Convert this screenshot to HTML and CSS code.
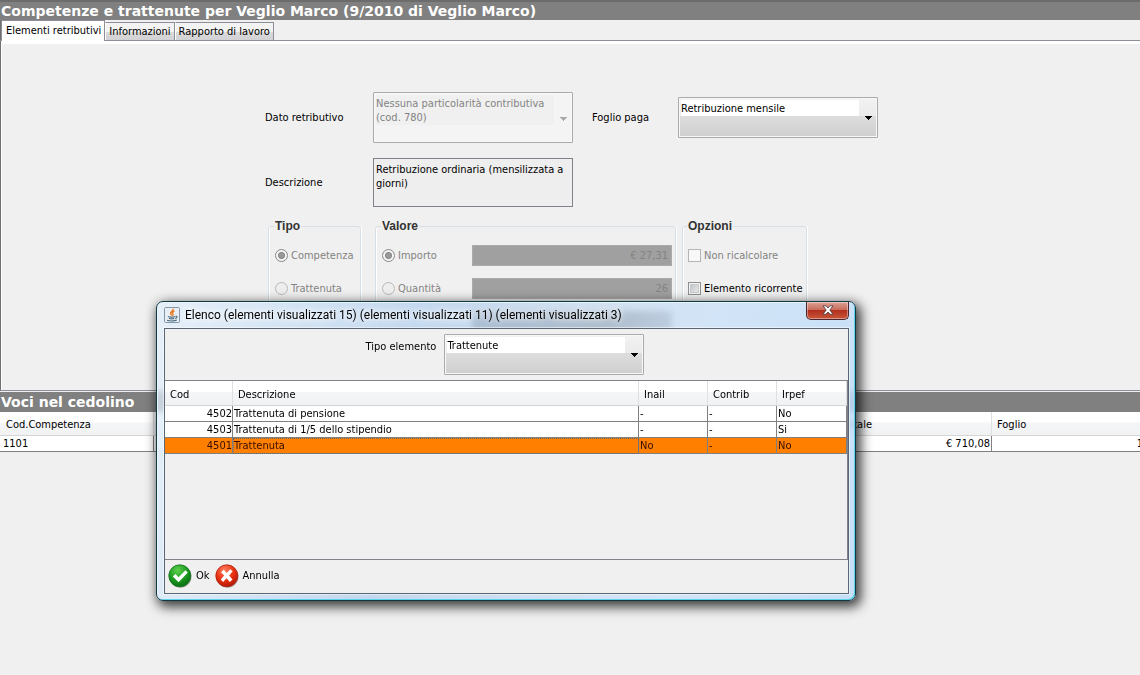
FILE: index.html
```html
<!DOCTYPE html>
<html lang="it">
<head>
<meta charset="utf-8">
<title>Competenze e trattenute</title>
<link rel="stylesheet" href="styles.css">
</head>
<body>
<main class="app">
  <h1 class="bar">Competenze e trattenute per Veglio Marco (9/2010 di Veglio Marco)</h1>
  <nav class="tabs" role="tablist">
    <button type="button" class="tab tab-active" role="tab" aria-selected="true">Elementi retributivi</button>
    <button type="button" class="tab" role="tab" aria-selected="false">Informazioni</button>
    <button type="button" class="tab" role="tab" aria-selected="false">Rapporto di lavoro</button>
  </nav>
  <form class="pane">
    <div class="form">
      <div class="fields">
        <label for="dato">Dato retributivo</label>
        <select id="dato" class="combo combo-disabled" disabled>
          <option>Nessuna particolarità contributiva (cod. 780)</option>
        </select>
        <label for="foglio" class="second">Foglio paga</label>
        <select id="foglio" class="combo">
          <option>Retribuzione mensile</option>
        </select>
        <label for="descr">Descrizione</label>
        <textarea id="descr" class="memo" readonly>Retribuzione ordinaria (mensilizzata a giorni)</textarea>
      </div>
      <div class="groups">
        <fieldset class="group group-type">
          <legend>Tipo</legend>
          <label class="choice off"><input type="radio" name="tipo" checked disabled>Competenza</label>
          <label class="choice off"><input type="radio" name="tipo" disabled>Trattenuta</label>
        </fieldset>
        <fieldset class="group group-value">
          <legend>Valore</legend>
          <div class="value-row">
            <label class="choice off"><input type="radio" name="valore" checked disabled>Importo</label>
            <input class="amount" type="text" value="€ 27,31" aria-label="Importo" disabled>
          </div>
          <div class="value-row">
            <label class="choice off"><input type="radio" name="valore" disabled>Quantità</label>
            <input class="amount" type="text" value="26" aria-label="Quantità" disabled>
          </div>
          <div class="value-row">
            <span></span>
            <input class="amount" type="text" aria-label="Totale" disabled>
          </div>
        </fieldset>
        <fieldset class="group group-options">
          <legend>Opzioni</legend>
          <label class="choice off"><input type="checkbox" disabled>Non ricalcolare</label>
          <label class="choice"><input type="checkbox">Elemento ricorrente</label>
        </fieldset>
      </div>
    </div>
  </form>
  <h2 class="bar bar-section">Voci nel cedolino</h2>
  <table class="grid grid-main">
    <colgroup><col class="m-code"><col><col class="m-total"><col class="m-sheet"></colgroup>
    <thead><tr><th>Cod.Competenza</th><th></th><th>Totale</th><th>Foglio</th></tr></thead>
    <tbody><tr><td>1101</td><td></td><td class="num">€ 710,08</td><td class="num">1</td></tr></tbody>
  </table>
</main>

<section class="dialog" role="dialog" aria-labelledby="dlg-title">
  <header class="titlebar">
    <svg class="java" viewBox="0 0 16 16" aria-hidden="true">
      <rect x=".5" y=".5" width="15" height="15" rx="1" fill="#e8eef3" stroke="#8295a8"/>
      <path d="M9.200 1.800C10 4 6 4.600 6.600 6.600c.2.700.8 1 1 1.900M10.500 4.200C8.200 5 8 6.200 9 7.200c.4.500 0 1-.6 1.500" fill="none" stroke="#e87a24" stroke-width="1.400"/>
      <path d="M4 9.500c1.600.8 5.500.8 7 0M5 11.300c1.500.6 4 .6 5.200 0M3 13.200c2.500 1 7.500 1 9.800-.1M11.500 9.300c2-.5 2.200 1.500-.3 2.100" fill="none" stroke="#48687f" stroke-width="1.100"/>
    </svg>
    <h2 id="dlg-title">Elenco (elementi visualizzati 15) (elementi visualizzati 11) (elementi visualizzati 3)</h2>
    <button type="button" class="close" aria-label="Chiudi">
      <svg viewBox="0 0 12 10" aria-hidden="true"><path d="M1 .8h3l2 2.200L8 .8h3L7.800 5 11 9.200H8L6 7 4 9.200H1L4.200 5z" fill="#fff" stroke="#56444a" stroke-width=".9"/></svg>
    </button>
  </header>
  <div class="content">
    <div class="filter">
      <label for="tipo-el">Tipo elemento</label>
      <select id="tipo-el" class="combo"><option>Trattenute</option></select>
    </div>
    <div class="list">
      <table class="grid grid-list">
        <colgroup><col class="l-code"><col><col class="l-flag"><col class="l-flag"><col class="l-last"></colgroup>
        <thead><tr><th>Cod</th><th>Descrizione</th><th>Inail</th><th>Contrib</th><th>Irpef</th></tr></thead>
        <tbody>
          <tr><td class="num">4502</td><td>Trattenuta di pensione</td><td>-</td><td>-</td><td>No</td></tr>
          <tr><td class="num">4503</td><td>Trattenuta di 1/5 dello stipendio</td><td>-</td><td>-</td><td>Si</td></tr>
          <tr class="selected"><td class="num">4501</td><td class="focus">Trattenuta</td><td>No</td><td>-</td><td>No</td></tr>
        </tbody>
      </table>
    </div>
    <footer class="actions">
      <button type="button" class="action">
        <svg viewBox="0 0 24 24" aria-hidden="true">
          <defs><radialGradient id="g" cx=".4" cy=".25" r=".8"><stop offset="0" stop-color="#5fd04f"/><stop offset=".55" stop-color="#1c9a20"/><stop offset="1" stop-color="#076a10"/></radialGradient></defs>
          <circle cx="12.500" cy="12.800" r="11" fill="#000" opacity=".3"/><circle cx="11.800" cy="11.800" r="11" fill="url(#g)" stroke="#11701a" stroke-width=".8"/>
          <path d="M4.800 12.500l2.600-2.600 3.200 3.300 6.800-7 2.400 2.200-9.200 9.800z" fill="#fff"/>
        </svg>Ok</button>
      <button type="button" class="action">
        <svg viewBox="0 0 24 24" aria-hidden="true">
          <defs><radialGradient id="r" cx=".4" cy=".25" r=".8"><stop offset="0" stop-color="#ff8060"/><stop offset=".55" stop-color="#e8300f"/><stop offset="1" stop-color="#b01505"/></radialGradient></defs>
          <circle cx="12.500" cy="12.800" r="11" fill="#000" opacity=".3"/><circle cx="11.800" cy="11.800" r="11" fill="url(#r)" stroke="#a82010" stroke-width=".8"/>
          <path d="M6 8.200L8.600 5.800 11.700 9l3.500-3.700 2.400 2-3.500 4.200 3.400 4-2.600 2.600-3.400-3.900-3.400 3.700-2.400-2.300 3.500-4z" fill="#fff"/>
        </svg>Annulla</button>
    </footer>
  </div>
</section>
</body>
</html>
```
FILE: styles.css
```css
* { box-sizing: border-box; }
html { height: 100%; overflow: hidden; }
body {
  margin: 0;
  min-height: 100%;
  background: #f0f0f0;
  color: #000;
  font: 11px/14px "DejaVu Sans Condensed", "DejaVu Sans", sans-serif;
}
button, input, select, textarea { font: inherit; color: inherit; margin: 0; }
h1, h2 { margin: 0; }

.app { overflow: hidden; }
.bar {
  height: 20px;
  padding-left: 1px;
  border-top: 2px solid #6c6c6c;
  background: #808080;
  color: #fff;
  font: bold 14px/18px "DejaVu Sans", sans-serif;
  white-space: nowrap;
}
.bar-section { border-top: 0; line-height: 20px; }

.tabs {
  display: flex;
  align-items: flex-end;
  height: 21px;
  padding-left: 1px;
  border-bottom: 1px solid #8c8e98;
  box-shadow: inset 1px 0 #707070;
}
.tab {
  height: 18px;
  padding: 0 3px;
  border: 1px solid #8c8e98;
  border-bottom: 0;
  border-left-color: #fff;
  background: linear-gradient(#f3f3f3 50%, #dadada 55%, #d2d2d6);
  white-space: nowrap;
  line-height: 18px;
}
.tab-active {
  height: 21px;
  margin-bottom: -1px;
  padding-bottom: 2px;
  padding-left: 4px;
  border-left: 1px solid #8c8e98;
  background: #fff;
  line-height: 17px;
}

.pane {
  height: 350px;
  padding-top: 51px;
  border: solid #707070;
  border-width: 0 0 1px 1px;
  box-shadow: inset 1px 3px #fff, inset 0 -1px #f0f0f0;
  border-bottom-color: #8c8e98;
  margin-bottom: 1px;
}
.form { width: max-content; margin: 0 auto; padding-left: 2px; }
.fields {
  display: grid;
  grid-template-columns: 108px 200px 105px 200px;
  align-items: center;
  row-gap: 15px;
}
.second { padding-left: 19px; }
.combo {
  appearance: none;
  width: 200px;
  height: 41px;
  padding: 3px 22px 20px 2px;
  border: 1px solid #a9aaae;
  border-radius: 1px;
  background:
    linear-gradient(#000, #000) 186px 18px / 7px 1px no-repeat,
    linear-gradient(#000, #000) 187px 19px / 5px 1px no-repeat,
    linear-gradient(#000, #000) 188px 20px / 3px 1px no-repeat,
    linear-gradient(#000, #000) 189px 21px / 1px 1px no-repeat,
    linear-gradient(#fff, #fff) 2px 2px / 178px 16px no-repeat,
    linear-gradient(#f2f2f2, #ebebeb 45%, #dddddd 46%, #cfcfcf);
  box-shadow: inset 0 0 0 1px #f8f8f8;
  line-height: 14px;
}
.combo-disabled {
  height: 51px;
  padding: 3px 20px 16px 2px;
  white-space: normal;
  opacity: 1;
  color: #838383;
  background:
    linear-gradient(#a9aaae, #a9aaae) 186px 24px / 7px 1px no-repeat,
    linear-gradient(#a9aaae, #a9aaae) 187px 25px / 5px 1px no-repeat,
    linear-gradient(#a9aaae, #a9aaae) 188px 26px / 3px 1px no-repeat,
    linear-gradient(#a9aaae, #a9aaae) 189px 27px / 1px 1px no-repeat,
    linear-gradient(#f0f0f0, #f0f0f0) 2px 2px / 178px 30px no-repeat,
    #f4f4f4;
}
.memo {
  width: 200px;
  height: 49px;
  padding: 4px 2px;
  border: 1px solid #7f8389;
  background: #eee;
  resize: none;
  overflow: hidden;
}

.groups { display: flex; margin: 12px 0 0 3px; }
.group {
  height: 146px;
  min-width: 0;
  margin: 0;
  padding: 12px 3px 0 6px;
  border: 1px solid #d5dfe5;
  border-radius: 3px;
  box-shadow: inset 1px 0 #fff, 1px 0 #fff;
}
.group legend {
  margin-left: -1px;
  padding: 0 1px;
  color: #333;
  font: bold 12px/14px "Liberation Sans", Arial, sans-serif;
}
.group-type { width: 93px; margin-right: 14px; }
.group-value { width: 301px; margin-right: 6px; }
.group-options { width: 125px; padding-left: 5px; }
.choice {
  display: flex;
  align-items: center;
  gap: 3px;
  height: 21px;
  margin-bottom: 12px;
  white-space: nowrap;
}
.off { color: #838383; }
.choice input {
  appearance: none;
  width: 13px;
  height: 13px;
  flex: none;
  border: 1px solid #8e8f8f;
  background: linear-gradient(135deg, #b4b9be, #f6f6f6);
  box-shadow: inset 0 0 0 1px #f4f4f4, inset 0 0 0 2px #c8ccd0;
}
.choice input[type="radio"] {
  border-radius: 50%;
  border-color: #b8b8b8;
  background: #eee;
  box-shadow: none;
}
.choice input[type="radio"]:checked {
  border-color: #888;
  background: radial-gradient(circle, #999 0 2px, #858585 3px, #f4f4f4 4px);
}
.choice input[type="checkbox"]:disabled { border-color: #b5b5b5; background: #f8f8f8; box-shadow: none; }
.value-row {
  display: flex;
  justify-content: space-between;
  height: 33px;
}
.amount {
  width: 200px;
  height: 21px;
  padding: 0 3px;
  border: 1px solid #ababab;
  background: #a0a0a0;
  color: #838383;
  text-align: right;
}

.grid {
  width: 100%;
  table-layout: fixed;
  border-spacing: 0;
}
.grid th {
  height: 24px;
  padding: 3px 5px 0;
  border-right: 1px solid #dfe0e2;
  border-bottom: 1px solid #d5d5d5;
  background: linear-gradient(#fff 45%, #f5f6f8 46%, #f0f2f4);
  font-weight: normal;
  text-align: left;
  line-height: 16px;
}
.grid td {
  height: 16px;
  padding: 0 1px;
  border-right: 1px solid #808080;
  border-bottom: 1px solid #808080;
  background: #fff;
  line-height: 15px;
  overflow: hidden;
  white-space: nowrap;
}
.grid .num { text-align: right; padding: 0; }
.grid-main { width: calc(100% + 4px); }
.grid-main th:first-child { padding-left: 6px; }
.grid-main td { padding-left: 3px; }
.grid-main td:nth-child(3) { padding-right: 1px; }
.m-code { width: 154px; }
.m-total { width: 154px; }
.m-sheet { width: 152px; }

.dialog {
  position: absolute;
  left: 156px;
  top: 301px;
  width: 700px;
  padding: 0 6px 6px 7px;
  border: 1px solid #123842;
  border-radius: 7px;
  background: linear-gradient(100deg, rgba(226, 240, 252, .75), rgba(175, 205, 237, .7) 35%, rgba(185, 212, 242, .55) 60%, rgba(205, 226, 248, .85) 75%, rgba(190, 220, 248, .85));
  backdrop-filter: blur(3px);
  box-shadow: inset 1px 1px #e8f5fc, inset -1px -1px #5bd3ec, 3px 4px 12px 2px rgba(0, 0, 0, .75);
}
.titlebar {
  display: flex;
  align-items: center;
  height: 26px;
}
.java { width: 16px; height: 16px; margin-right: 5px; flex: none; }
.titlebar h2 {
  flex: 1;
  font: 12px/16px Roboto, sans-serif;
  text-shadow: 0 0 5px #fff, 0 0 8px #fff;
  white-space: nowrap;
}
.close {
  display: flex;
  align-items: center;
  justify-content: center;
  align-self: flex-start;
  width: 43px;
  height: 18px;
  padding: 0 0 1px;
  border: 1px solid #4b2630;
  border-top: 0;
  border-radius: 0 0 5px 5px;
  background: linear-gradient(#dda295, #c96c5c 45%, #b2301d 50%, #c9553a);
  box-shadow: inset 0 0 0 1px rgba(255, 255, 255, .4);
}
.close svg { width: 12px; height: 10px; }

.content {
  border: 1px solid #596674;
  background: #f0f0f0;
  box-shadow: 0 0 0 1px rgba(255, 255, 255, .5);
}
.filter {
  display: flex;
  align-items: flex-start;
  justify-content: center;
  gap: 8px;
  height: 51px;
  padding: 5px 3px 0 0;
}
.filter label { line-height: 26px; }
.list {
  height: 180px;
  border: 1px solid #80838a;
  border-left: 0;
}
.l-code { width: 68px; }
.l-flag { width: 69px; }
.l-last { width: 70px; }
.grid-list th { height: 25px; }
.grid-list .selected td { background: #ff8000; color: #330c00; }
.grid-list .focus { outline: 1px dotted #6a6a6a; outline-offset: -1px; }
.actions { display: flex; gap: 5px; height: 33px; padding: 2px 3px; }
.action {
  display: flex;
  align-items: center;
  gap: 4px;
  height: 28px;
  padding: 0;
  border: 0;
  background: none;
}
.action svg { width: 24px; height: 24px; }
```
